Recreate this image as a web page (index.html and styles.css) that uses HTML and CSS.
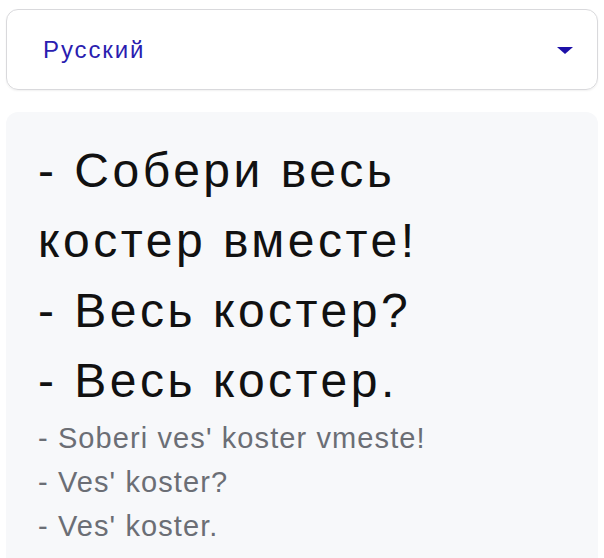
FILE: index.html
```html
<!DOCTYPE html>
<html lang="ru">
<head>
    <meta charset="UTF-8">
    <meta name="viewport" content="width=device-width, initial-scale=1.0">
    <title>Фраза</title>
    <link rel="stylesheet" href="styles.css">
</head>
<body>
    <div class="page">
        <div class="lang-select">
            <span class="lang-name">Русский</span>
            <span class="caret"></span>
        </div>
        <div class="card">
            <div class="phrase">
                <p>- Собери весь костер вместе!</p>
                <p>- Весь костер?</p>
                <p>- Весь костер.</p>
            </div>
            <div class="translit">
                <p>- Soberi ves' koster vmeste!</p>
                <p>- Ves' koster?</p>
                <p>- Ves' koster.</p>
            </div>
        </div>
    </div>
</body>
</html>
```

FILE: styles.css
```css
body {
    margin: 0;
    background: #fff;
    font-family: "Liberation Sans", Arial, sans-serif;
}
.page {
    padding: 9px 6px 0 6px;
    display: flex;
    flex-direction: column;
    gap: 22px;
}
.lang-select {
    height: 79px;
    border: 1px solid #d9d9dc;
    border-radius: 12px;
    box-shadow: 0 1px 2px rgba(0, 0, 0, 0.06);
    display: flex;
    align-items: center;
    justify-content: space-between;
    padding: 0 24px 0 36px;
}
.lang-name {
    font-size: 24px;
    letter-spacing: 1.9px;
    color: #2b1db0;
}
.caret {
    margin-top: 2px;
    width: 0;
    height: 0;
    border-left: 8px solid transparent;
    border-right: 8px solid transparent;
    border-top: 7px solid #1d10a8;
}
.card {
    background: #f7f8fa;
    border-radius: 12px;
    padding: 24px 32px 20px;
    min-height: 460px;
}
.card p {
    margin: 0;
}
.phrase {
    width: 440px;
    font-size: 48px;
    line-height: 70px;
    letter-spacing: 3.5px;
    color: #111;
}
.translit {
    font-size: 29px;
    line-height: 44px;
    letter-spacing: 1.1px;
    color: #6b6e75;
}
```
